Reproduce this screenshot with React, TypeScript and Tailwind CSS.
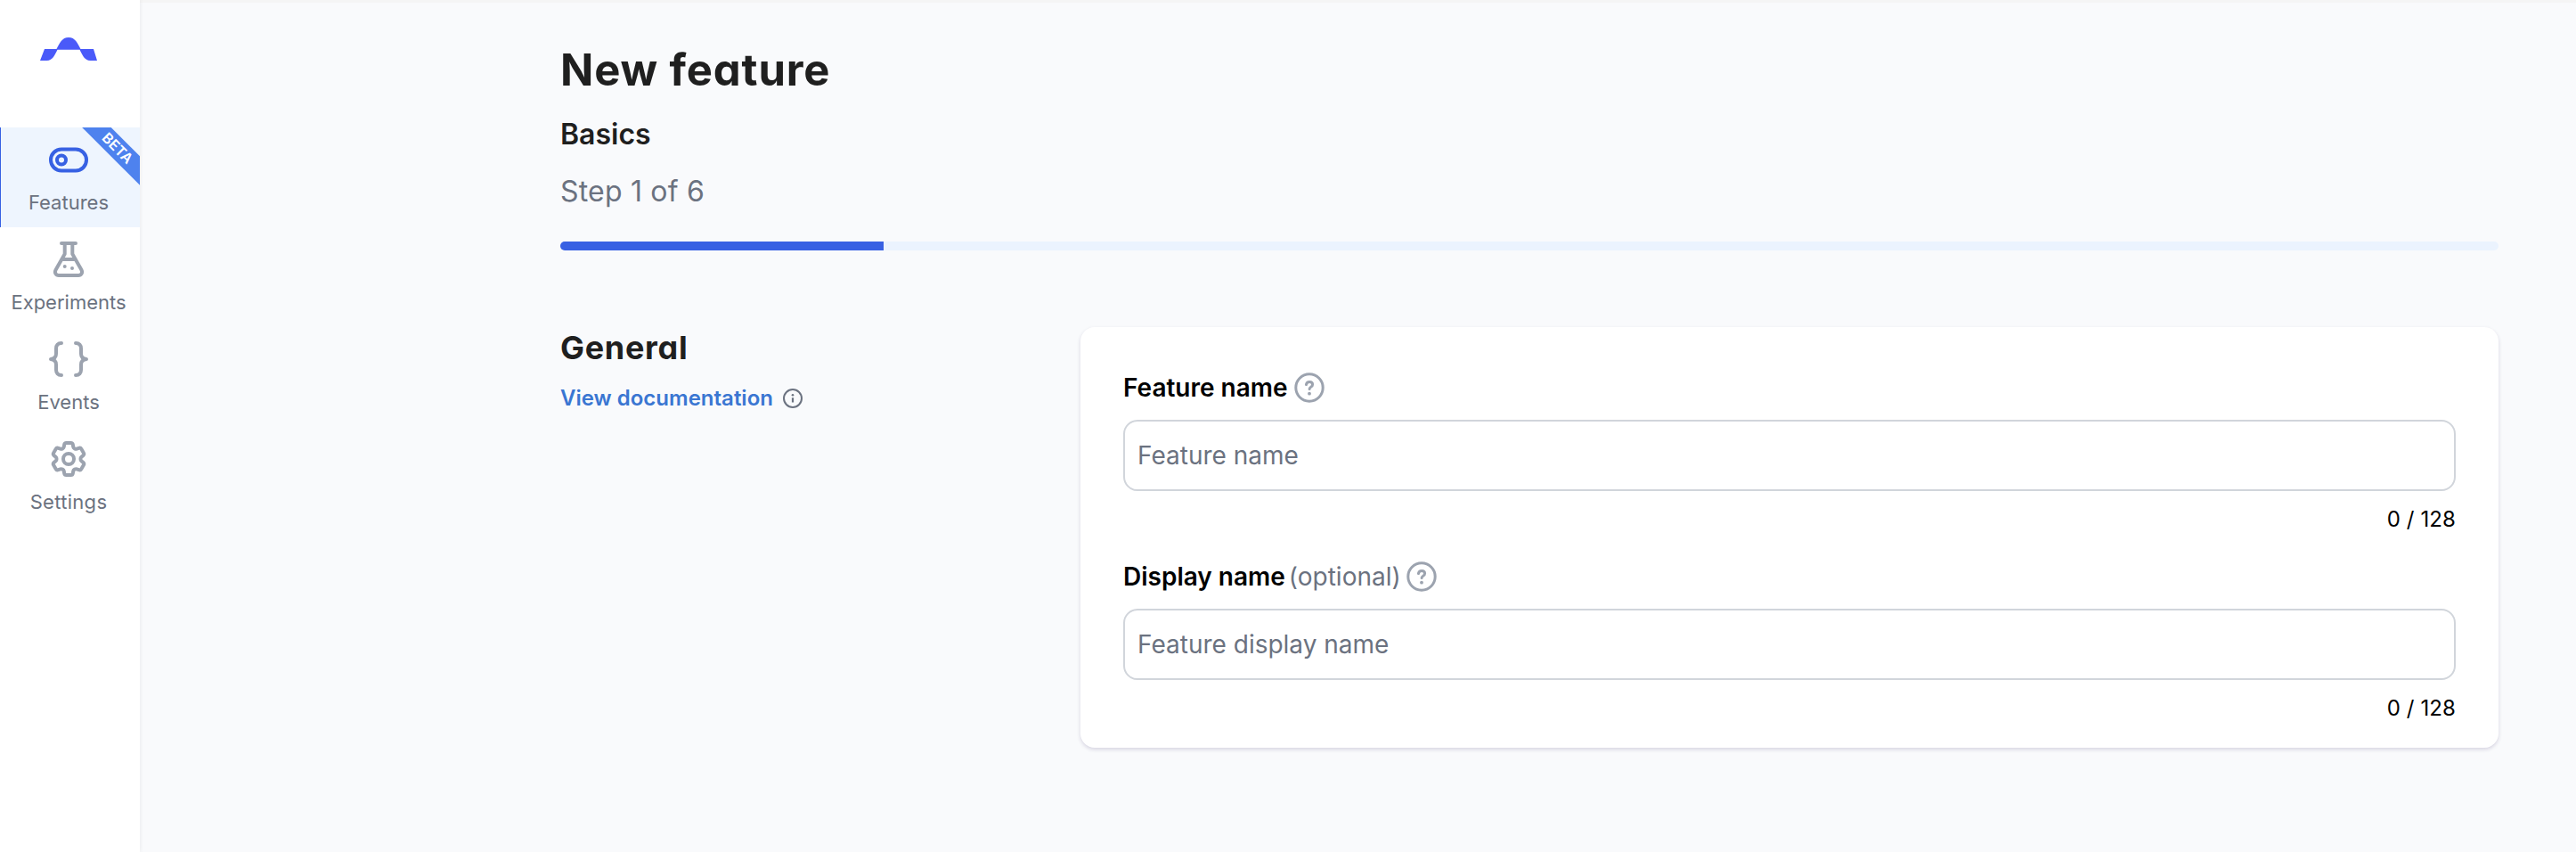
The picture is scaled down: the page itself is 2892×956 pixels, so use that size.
import React from "react";
import { HiOutlineCog6Tooth } from "react-icons/hi2";

function Logo() {
  return (
    <svg width="64" height="27" viewBox="0 0 64 27" fill="#4a5af9">
      <path d="M5 13H18.500C22 6.500 24.500 0 32 0S42 6.500 45.500 13H60L64 26H56.500C49.500 26 47.500 19.500 44.500 13.800H19.500C16.500 19.500 14.500 26 7.500 26H0Z" />
    </svg>
  );
}

function StrokeIcon({ children }: { children: React.ReactNode }) {
  return (
    <svg
      className="size-12"
      viewBox="0 0 48 48"
      fill="none"
      stroke="currentColor"
      strokeWidth="4"
      strokeLinecap="round"
      strokeLinejoin="round"
    >
      {children}
    </svg>
  );
}

function ToggleIcon() {
  return (
    <StrokeIcon>
      <rect x="4" y="12.500" width="40" height="24" rx="12" />
      <circle cx="16" cy="24.500" r="5" />
    </StrokeIcon>
  );
}

function FlaskIcon() {
  return (
    <StrokeIcon>
      <path d="M16 6H32M19.700 6V18L9.600 35.800C7.800 39 9.700 42 13 42H35C38.300 42 40.200 39 38.400 35.800L28.300 18V6M17.300 24H30.700" />
      <circle cx="19.700" cy="32" r="2" fill="currentColor" stroke="none" />
      <circle cx="28" cy="34" r="2" fill="currentColor" stroke="none" />
    </StrokeIcon>
  );
}

function BracesIcon() {
  return (
    <StrokeIcon>
      <path d="M16 6C12 6 10 8.500 10 12V18C10 21.500 8.500 23.500 4 24C8.500 24.500 10 26.500 10 30V36C10 39.500 12 42 16 42" />
      <path d="M32 6C36 6 38 8.500 38 12V18C38 21.500 39.500 23.500 44 24C39.500 24.500 38 26.500 38 30V36C38 39.500 36 42 32 42" />
    </StrokeIcon>
  );
}

function HelpIcon() {
  return (
    <svg className="size-10 shrink-0 text-[#9ca3af]" viewBox="0 0 40 40" fill="none" stroke="currentColor">
      <circle cx="20" cy="20" r="15.200" strokeWidth="3" />
      <path
        d="M16.400 16.600C16.800 14.500 18.200 13.400 20.200 13.400C22.200 13.400 23.600 14.600 23.600 16.500C23.600 19.200 20.100 19 20.100 21.600"
        strokeWidth="3"
        strokeLinecap="round"
      />
      <circle cx="20" cy="26.700" r="1.900" fill="currentColor" stroke="none" />
    </svg>
  );
}

function InfoIcon() {
  return (
    <svg className="size-[22px]" viewBox="0 0 22 22" fill="none" stroke="#6b7280">
      <circle cx="11" cy="11" r="10" strokeWidth="2" />
      <path d="M11 10.300V15.500" strokeWidth="2.200" />
      <circle cx="11" cy="7.300" r="1.300" fill="#6b7280" stroke="none" />
    </svg>
  );
}

function NavItem({
  icon,
  label,
  active = false,
}: {
  icon: React.ReactNode;
  label: React.ReactNode;
  active?: boolean;
}) {
  return (
    <a
      className={
        active
          ? "relative flex h-28 w-full flex-col items-center overflow-hidden bg-[#eef5fe] pt-3 text-[#3761e3]"
          : "relative flex h-28 w-full flex-col items-center pt-3 text-[#9ca3af]"
      }
    >
      <span className="-ml-[3px]">{icon}</span>
      <span className="-ml-[3px] mt-2 text-[22px] leading-8 text-[#6b7280]">{label}</span>
      {active && (
        <>
          <span className="absolute inset-y-0 left-0 w-px bg-[#3761e3]" />
          <span className="absolute left-[66px] top-[11.500px] flex h-[22.600px] w-[132px] rotate-45 items-center justify-center bg-[#4e82ee] text-base font-semibold text-white">
            BETA
          </span>
        </>
      )}
    </a>
  );
}

function Field({ label, optional = false, placeholder }: { label: string; optional?: boolean; placeholder: string }) {
  return (
    <div className="flex flex-col">
      <div className="flex h-10 items-center text-[28px] leading-10 text-black">
        <span className="font-semibold">{label}</span>
        {optional && <span className="ml-1 text-[#6b7280]">(optional)</span>}
        <span className={optional ? "ml-[3px]" : "ml-1"}>
          <HelpIcon />
        </span>
      </div>
      <input
        className="mt-4 h-20 w-full rounded-2xl border-2 border-[#d1d5db] bg-white px-3.5 text-[28px] text-black placeholder:text-[#6b7280]"
        placeholder={placeholder}
      />
      <div className="mt-4 text-right text-2xl leading-8 tracking-[0.100px] text-black">0 / 128</div>
    </div>
  );
}

export default function App() {
  return (
    <div className="flex h-[956px] w-full overflow-hidden bg-[#f9fafc] font-['Inter',sans-serif]">
      <aside className="z-10 flex w-[157px] shrink-0 flex-col bg-white shadow-[1px_0_4px_rgba(0,0,0,0.060)]">
        <div className="flex h-[143px] pl-[45px] pt-[42px]">
          <Logo />
        </div>
        <NavItem active icon={<ToggleIcon />} label="Features" />
        <NavItem icon={<FlaskIcon />} label="Experiments" />
        <NavItem icon={<BracesIcon />} label="Events" />
        <NavItem
          icon={<HiOutlineCog6Tooth className="size-12" strokeWidth={2} />}
          label={<span className="tracking-[0.300px]">Settings</span>}
        />
      </aside>

      <main className="flex grow flex-col border-t-[3px] border-[#f5f5f5] pl-[472px] pr-[87px] pt-11">
        <h1 className="h-16 text-[49px] font-bold leading-[64px] tracking-[0.850px] text-[#1f1f1f] [font-feature-settings:'cv11']">
          New feature
        </h1>
        <h2 className="mt-5 text-[32px] font-semibold leading-10 text-[#1f1f1f]">Basics</h2>
        <p className="mt-6 text-[32px] leading-10 tracking-[0.200px] text-[#6b7280]">Step 1 of 6</p>
        <div className="mt-9 h-2.5 overflow-hidden rounded-full bg-[#ebf3fe]">
          <div className="h-full w-1/6 bg-[#3861e3]" />
        </div>

        <div className="mt-[86px] flex">
          <section className="w-[584px] shrink-0">
            <h2 className="text-4xl font-bold leading-[46px] tracking-[0.700px] text-[#1f1f1f] [font-feature-settings:'cv11']">
              General
            </h2>
            <div className="mt-[18px] flex h-8 items-center gap-[11px]">
              <a className="text-2xl font-semibold leading-8 text-[#3a76d2]">View documentation</a>
              <InfoIcon />
            </div>
          </section>
          <section className="flex h-[472px] grow flex-col gap-7 rounded-2xl bg-white px-12 pt-12 shadow-[0_2px_4px_rgba(40,20,90,0.160)]">
            <Field label="Feature name" placeholder="Feature name" />
            <Field label="Display name" optional placeholder="Feature display name" />
          </section>
        </div>
      </main>
    </div>
  );
}
